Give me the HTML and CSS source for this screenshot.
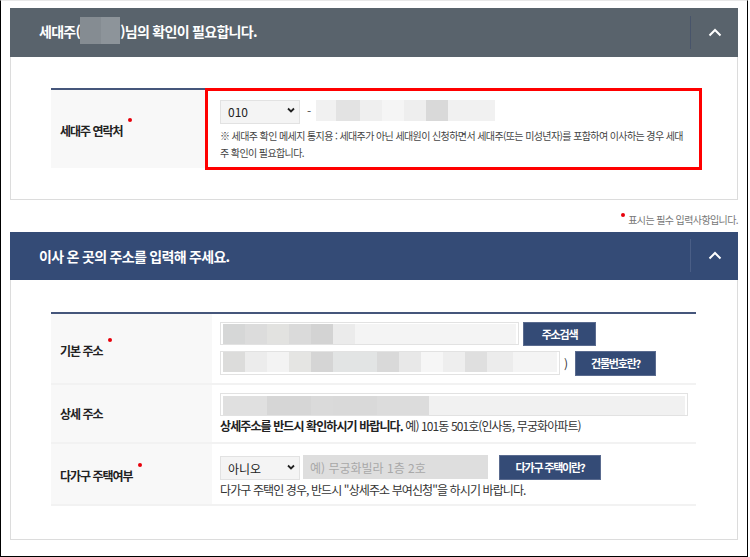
FILE: index.html
```html
<!DOCTYPE html>
<html lang="ko">
<head>
<meta charset="UTF-8" />
<meta name="viewport" content="width=device-width, initial-scale=1" />
<title>전입신고 - 세대주 확인</title>
<link rel="stylesheet" href="styles.css">
</head>
<body>

<div class="frame">

  <section class="panel panel-gray">
    <div class="panel-head">
      <h2 class="panel-title">세대주(<span class="masked-name"></span>)님의 확인이 필요합니다.</h2>
      <button class="toggle" type="button" aria-label="접기">
        <svg width="14" height="9" viewBox="0 0 14 9"><polyline points="1.5,7.5 7,2 12.5,7.5" fill="none" stroke="#fff" stroke-width="2"/></svg>
      </button>
    </div>
    <div class="panel-body">
      <table class="form-table table-owner">
        <tr>
          <th>세대주 연락처<span class="req"></span></th>
          <td class="highlight">
            <div class="field-line">
              <span class="select-wrap">
                <select class="select"><option>010</option></select>
                <svg class="caret" width="8" height="6" viewBox="0 0 8 6"><polyline points="1,1.5 4,4.5 7,1.5" fill="none" stroke="#222" stroke-width="1.8"/></svg>
              </span>
              <span class="dash">-</span>
              <input class="input masked-phone" type="text" aria-label="전화번호">
            </div>
            <p class="note">※ 세대주 확인 메세지 통지용 : 세대주가 아닌 세대원이 신청하면서 세대주(또는 미성년자)를 포함하여 이사하는 경우 세대주 확인이 필요합니다.</p>
          </td>
        </tr>
      </table>
    </div>
  </section>

  <p class="req-note"><span class="req"></span>표시는 필수 입력사항입니다.</p>

  <section class="panel panel-navy">
    <div class="panel-head">
      <h2 class="panel-title">이사 온 곳의 주소를 입력해 주세요.</h2>
      <button class="toggle" type="button" aria-label="접기">
        <svg width="14" height="9" viewBox="0 0 14 9"><polyline points="1.5,7.5 7,2 12.5,7.5" fill="none" stroke="#fff" stroke-width="2"/></svg>
      </button>
    </div>
    <div class="panel-body">
      <table class="form-table table-address">
        <tr>
          <th>기본 주소<span class="req"></span></th>
          <td>
            <div class="field-line">
              <input class="input addr-main" type="text" aria-label="기본 주소">
              <button class="btn btn-search" type="button">주소검색</button>
            </div>
            <div class="field-line line-gap">
              <input class="input addr-sub" type="text" aria-label="참고 주소">
              <span class="paren">)</span>
              <button class="btn btn-building" type="button">건물번호란?</button>
            </div>
          </td>
        </tr>
        <tr>
          <th>상세 주소</th>
          <td>
            <input class="input addr-detail" type="text" aria-label="상세 주소">
            <p class="help"><strong>상세주소를 반드시 확인하시기 바랍니다.</strong> 예) 101동 501호(인사동, 무궁화아파트)</p>
          </td>
        </tr>
        <tr>
          <th>다가구 주택여부<span class="req"></span></th>
          <td class="multi">
            <div class="field-line">
              <span class="select-wrap">
                <select class="select"><option>아니오</option><option>예</option></select>
                <svg class="caret" width="8" height="6" viewBox="0 0 8 6"><polyline points="1,1.5 4,4.5 7,1.5" fill="none" stroke="#222" stroke-width="1.8"/></svg>
              </span>
              <input class="input input-unit" type="text" placeholder="예) 무궁화빌라 1층 2호" disabled>
              <button class="btn btn-multi" type="button">다가구 주택이란?</button>
            </div>
            <p class="help">다가구 주택인 경우, 반드시 "상세주소 부여신청"을 하시기 바랍니다.</p>
          </td>
        </tr>
      </table>
    </div>
  </section>

</div>

</body>
</html>
```

FILE: styles.css
```css
body {
  margin: 0;
  font-family: "Noto Sans CJK KR", "Noto Sans", sans-serif;
  color: #333;
  background-color: #fff;
}
.frame {
  box-sizing: border-box;
  width: 748px;
  height: 557px;
  padding: 7px 9px 0 9px;
  border: 1px solid #000;
  border-top-color: #e8e8e8;
}

/* panels */
.panel {
  width: 728px;
  box-sizing: border-box;
  border: 1px solid #dcdcdc;
  background-color: #fff;
}
.panel-head {
  display: flex;
  align-items: center;
  margin: -1px -1px 0 -1px;
}
.panel-gray .panel-head {
  height: 49px;
  background-color: #59636c;
}
.panel-navy .panel-head {
  height: 48px;
  background-color: #344b76;
}
.panel-title {
  flex: 1;
  margin: 0;
  padding-left: 29px;
  font-size: 14px;
  font-weight: 700;
  letter-spacing: -0.7px;
  color: #fff;
  line-height: 20px;
}
.masked-name {
  display: inline-block;
  width: 40px;
  height: 27px;
  vertical-align: middle;
  margin: -4px 0 0 0;
  background: linear-gradient(to right, #858c92 0 21px, #8d949a 21px 40px);
}
.toggle {
  width: 48px;
  height: 33px;
  padding: 0;
  border: 0;
  border-left: 1px solid #48546a;
  background: transparent;
  display: flex;
  align-items: center;
  justify-content: center;
  cursor: pointer;
}
.panel-navy .toggle {
  border-left-color: #4a5e86;
}
.panel-gray .panel-body {
  padding: 31px 41px 31px 40px;
}
.panel-navy .panel-body {
  padding: 32px 41px 33px 40px;
}

/* form table */
.form-table {
  width: 645px;
  border-collapse: collapse;
  border-top: 2px solid #45567b;
}
.form-table th {
  box-sizing: border-box;
  padding: 0 0 0 9px;
  text-align: left;
  vertical-align: middle;
  background-color: #f8f8f8;
  font-size: 12px;
  font-weight: 700;
  letter-spacing: -1px;
  color: #222;
}
.table-owner th {
  width: 154px;
}
.table-address th {
  width: 161px;
}
.form-table td {
  padding: 8px 8px 7px 8px;
  vertical-align: top;
}
.table-address tr {
  border-bottom: 2px solid #f2f2f2;
}
.table-owner td {
  height: 61px;
  padding-left: 15px;
}
.table-address td.multi {
  padding-top: 11px;
  padding-bottom: 5px;
}
.highlight {
  position: relative;
}
.highlight::after {
  content: "";
  position: absolute;
  left: 0;
  top: -2px;
  right: -6px;
  bottom: -2px;
  border: 3px solid #f00;
  pointer-events: none;
}
.req {
  display: inline-block;
  width: 4px;
  height: 4px;
  margin-left: 5px;
  border-radius: 50%;
  background-color: #e8000b;
  vertical-align: 14px;
}

/* controls */
.field-line {
  display: flex;
  align-items: center;
}
.line-gap {
  margin-top: 5px;
}
.select-wrap {
  position: relative;
  display: inline-block;
}
.select {
  appearance: none;
  box-sizing: border-box;
  width: 80px;
  height: 24px;
  padding: 0 0 0 7px;
  border: 1px solid #e2e2e2;
  background-color: #f4f4f4;
  font-family: "Noto Sans CJK KR", sans-serif;
  font-size: 12px;
  color: #222;
  border-radius: 0;
}
.caret {
  position: absolute;
  right: 5px;
  top: 9px;
  pointer-events: none;
}
.dash {
  margin: 0 5px 0 7px;
  font-size: 12px;
  color: #555;
}
.input {
  box-sizing: border-box;
  height: 23px;
  border: 1px solid #e2e2e2;
  background-color: #f4f4f4;
  font-family: "Noto Sans CJK KR", sans-serif;
  font-size: 12px;
  padding: 0 6px;
  border-radius: 0;
}
.masked-phone {
  width: 179px;
  height: 21px;
  border: 0;
  background: linear-gradient(to right, #f1f1f1 0 20px, #e3e3e3 20px 44px, #efefef 44px 66px, #f5f5f5 66px 88px, #eeeeee 88px 110px, #d9d9d9 110px 132px, #f1f1f1 132px);
}
.addr-main {
  width: 299px;
  background: linear-gradient(to right, #d6d7d7 0 22px, #dcdcdc 22px 44px, #e2e2e0 44px 66px, #dadada 66px 88px, #d3d3d3 88px 110px, #ebebeb 110px 132px, #f4f4f4 132px);
  background-origin: content-box;
  background-clip: content-box;
  padding: 1px 2px 0 2px;
}
.addr-sub {
  width: 340px;
  height: 24px;
  background: linear-gradient(to right, #dcdcdb 0 22px, #ececec 22px 44px, #f3f3f3 44px 66px, #e5e5e3 66px 88px, #d5d5d5 88px 110px, #e2e4e4 110px 154px, #d9d9d9 154px 176px, #e8e8e8 176px 198px, #f6f6f6 198px 220px, #eeeeee 220px 242px, #dfdfdf 242px 264px, #ececec 264px 290px, #f4f4f4 290px);
  background-origin: content-box;
  background-clip: content-box;
  padding: 0 2px 2px 2px;
}
.paren {
  margin: 0 7px 0 4px;
  font-size: 12px;
  color: #333;
}
.addr-detail {
  display: block;
  width: 468px;
  background: linear-gradient(to right, #e0e0e0 0 44px, #d6d6d6 44px 88px, #dadada 88px 110px, #d9d9d9 110px 154px, #dcdcdc 154px 206px, #f1f1f1 206px);
  background-origin: content-box;
  background-clip: content-box;
  padding: 2px 2px 0 2px;
}
.input-unit {
  width: 185px;
  height: 24px;
  margin-left: 3px;
  border: 0;
  background-color: #dedede;
  padding-left: 7px;
}
.input-unit::placeholder {
  color: #a8a8a8;
}
.btn {
  box-sizing: border-box;
  height: 24px;
  padding: 0;
  border: 1px solid #5a6b8f;
  background-color: #344b76;
  color: #fff;
  font-family: "Noto Sans CJK KR", sans-serif;
  font-size: 11px;
  font-weight: 700;
  letter-spacing: -1.2px;
  cursor: pointer;
}
.btn-search {
  width: 73px;
  margin-left: 4px;
}
.btn-building {
  width: 81px;
  height: 25px;
}
.btn-multi {
  width: 102px;
  height: 25px;
  margin-left: 11px;
}

/* texts */
.note {
  margin: 3px 0 0 0;
  font-size: 10px;
  line-height: 17px;
  letter-spacing: -0.6px;
  color: #444;
}
.help {
  margin: 1px 0 0 0;
  font-size: 12px;
  line-height: 18px;
  letter-spacing: -0.9px;
  color: #333;
}
.help strong {
  color: #222;
}
.req-note {
  width: 728px;
  margin: 0;
  padding: 12px 0 4px 0;
  text-align: right;
  font-size: 10px;
  line-height: 16px;
  letter-spacing: -0.6px;
  color: #777;
}
.req-note .req {
  margin: 0 3px 0 0;
  vertical-align: 7px;
}
```
